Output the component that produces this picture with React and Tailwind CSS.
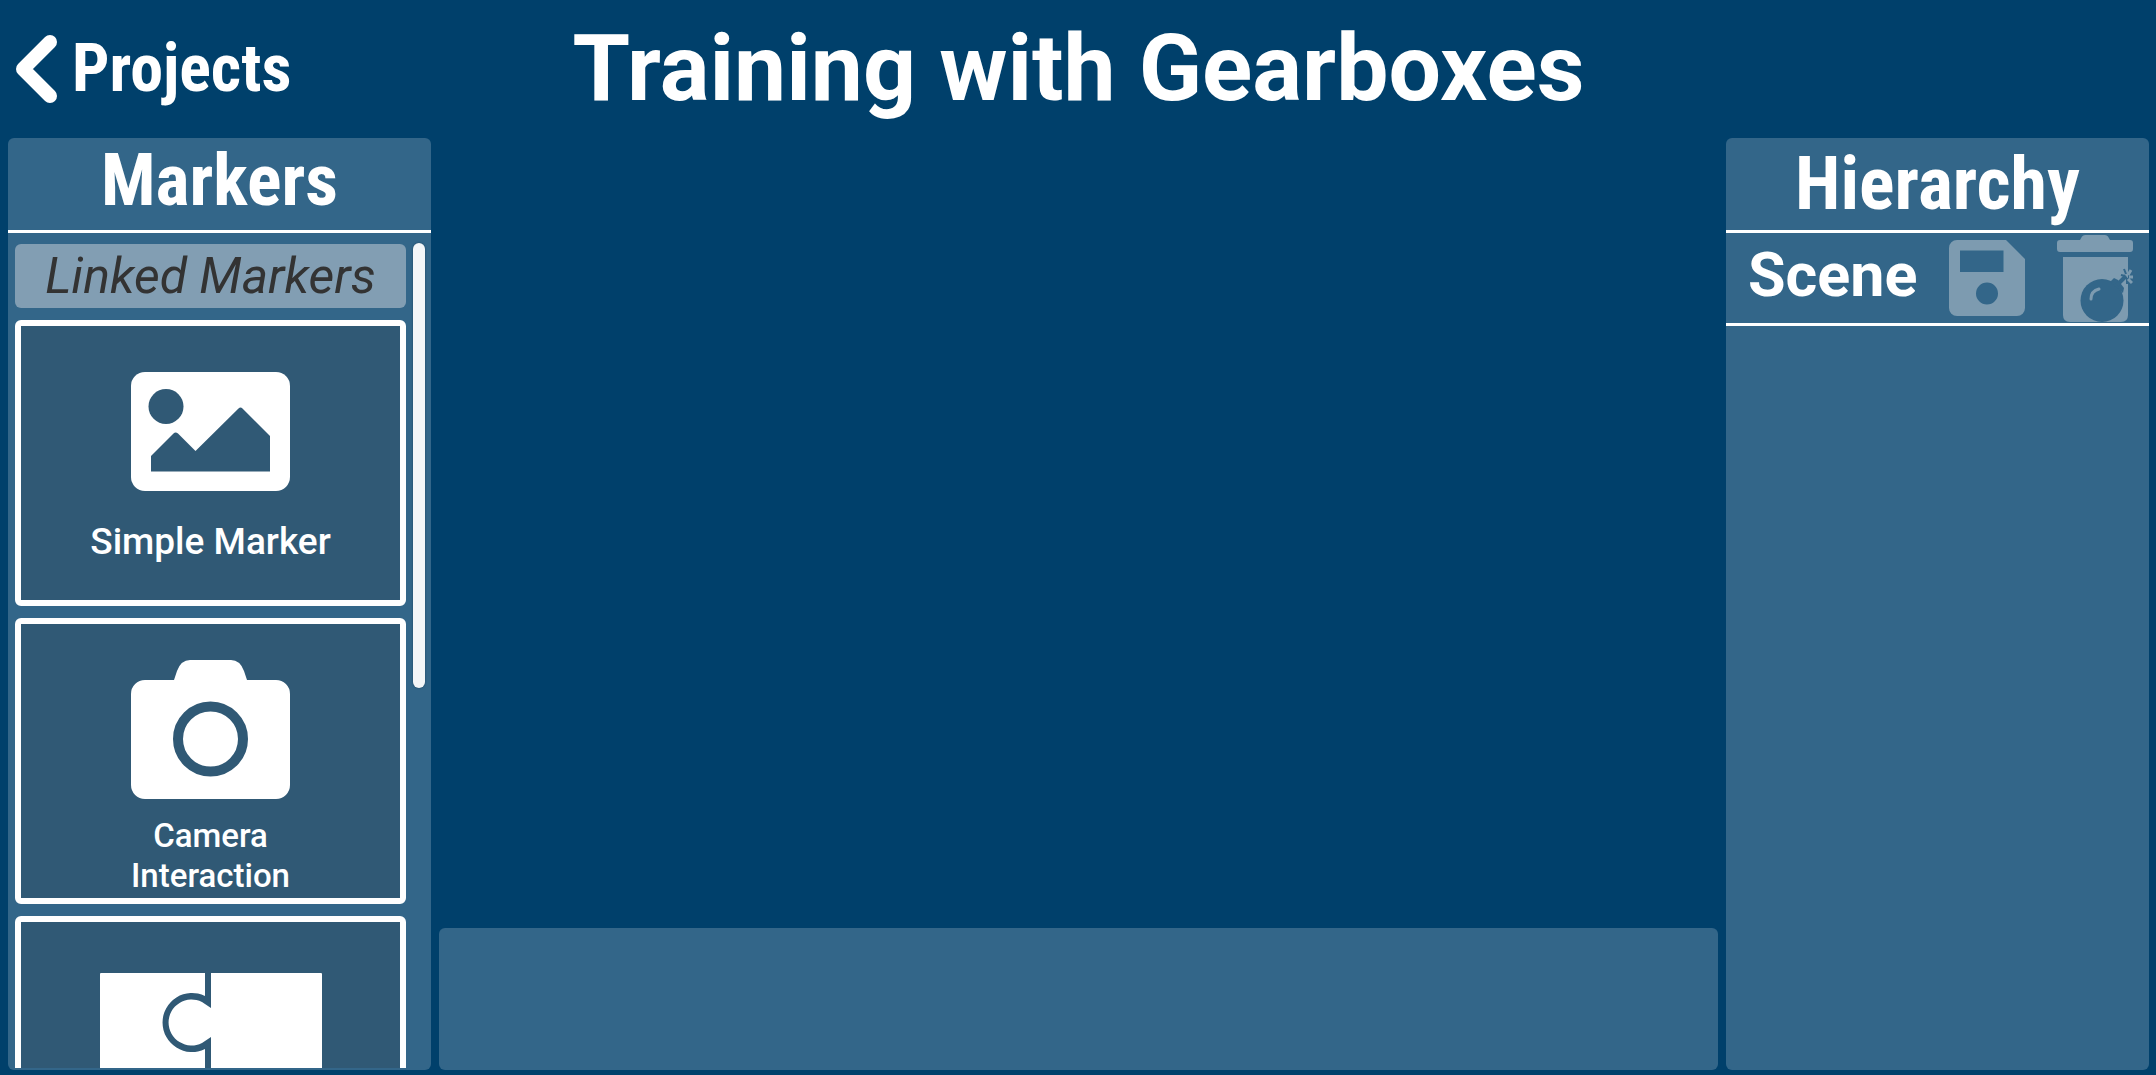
import React from 'react';

function ImageIcon() {
  return (
    <svg width="159" height="119" viewBox="0 0 159 119" fill="none" aria-hidden="true">
      <rect width="159" height="119" rx="14" fill="#fff" />
      <circle cx="35" cy="34.5" r="17.5" fill="#305975" />
      <path d="M20 84 42.5 61.5Q44.500 59.500 47 61.500L64.500 79 107.500 36.500Q109.500 34.500 111.500 36.500L139 64V99.500H20Z" fill="#305975" />
    </svg>
  );
}

function CameraIcon() {
  return (
    <svg width="159" height="139" viewBox="0 0 159 139" fill="none" aria-hidden="true">
      <path d="M14 20H43L46 11Q50 0 59 0H100Q109 0 113 11L116 20H145A14 14 0 0 1 159 34V125A14 14 0 0 1 145 139H14A14 14 0 0 1 0 125V34A14 14 0 0 1 14 20Z" fill="#fff" />
      <circle cx="79.500" cy="79" r="32.500" stroke="#305975" strokeWidth="10" />
    </svg>
  );
}

function PuzzleIcon() {
  return (
    <svg width="222" height="109" viewBox="0 0 222 109" fill="none" aria-hidden="true">
      <rect width="222" height="109" rx="1" fill="#fff" />
      <path d="M105 0H111V35L102 29A23 23 0 1 0 102 70L111 64V109H105V76A29.500 29.500 0 1 1 105 23Z" fill="#305975" />
    </svg>
  );
}

function SaveIcon() {
  return (
    <svg width="76" height="76" viewBox="0 0 76 76" aria-hidden="true">
      <path fillRule="evenodd" fill="#7d9bb0" d="M8 0H57L76 19V68A8 8 0 0 1 68 76H8A8 8 0 0 1 0 68V8A8 8 0 0 1 8 0ZM11 10.500V32H54.500V10.500ZM38 42.500A11 11 0 1 0 38 64.500A11 11 0 1 0 38 42.500Z" />
    </svg>
  );
}

function TrashBombIcon() {
  return (
    <svg width="76" height="87" viewBox="0 0 76 87" fill="none" aria-hidden="true">
      <path fill="#7d9bb0" d="M3 5H23L25 1.500Q26 0 28 0H48Q50 0 51 1.500L53 5H73Q76 5 76 8V14Q76 17 73 17H3Q0 17 0 14V8Q0 5 3 5Z" />
      <path fill="#7d9bb0" d="M6 22H71V80Q71 87 64 87H13Q6 87 6 80Z" />
      <circle cx="45" cy="65.500" r="21.500" fill="#336689" />
      <path d="M53 47 57 43 61 45 67 53 66 58Z" fill="#336689" />
      <path d="M34 64Q34 56 42 54" stroke="#7d9bb0" strokeWidth="3" strokeLinecap="round" />
      <path d="M60 50 69 41" stroke="#336689" strokeWidth="4" />
      <path d="M64 40 68 41M67 34 69 39M70 43V49" stroke="#336689" strokeWidth="2" />
      <path d="M71 40 74 35M72 42H76M71 44 75 48" stroke="#7d9bb0" strokeWidth="3" />
    </svg>
  );
}

const markers = [
  { name: 'Simple Marker', Icon: ImageIcon, caption: 'Simple Marker', text: 'text-[37px] leading-[52px]' },
  { name: 'Camera Interaction', Icon: CameraIcon, caption: 'Camera Interaction', text: 'w-48 pt-0.5 text-[33px] leading-10' },
  { name: 'Puzzle', Icon: PuzzleIcon },
];

function MarkerCard({ name, Icon, caption, text }) {
  return (
    <button
      type="button"
      aria-label={name}
      className="flex h-[286px] w-full shrink-0 flex-col items-center rounded-md border-6 border-white bg-[#305975] pt-5"
    >
      <span className="flex h-[170px] shrink-0 items-center justify-center">
        <Icon />
      </span>
      {caption && <span className={`font-medium ${text}`}>{caption}</span>}
    </button>
  );
}

export default function App() {
  return (
    <div className="flex h-screen flex-col overflow-hidden bg-[#00406b] pr-[7px] pb-[5px] pl-2 font-['Roboto',sans-serif] text-white">
      <header className="grid h-[138px] shrink-0 grid-cols-[423px_1fr_423px] items-center">
        <a href="#projects" className="flex items-center gap-3.5 pl-2 font-['Roboto_Condensed','Roboto',sans-serif] text-[66px] leading-[80px] font-bold">
          <svg width="42" height="68" viewBox="0 0 42 68" fill="none" aria-hidden="true">
            <path d="M34 7 7 34 34 61" stroke="#fff" strokeWidth="14" strokeLinecap="round" strokeLinejoin="round" />
          </svg>
          Projects
        </a>
        <h1 className="text-center text-[93px] leading-[110px] font-bold whitespace-nowrap">Training with Gearboxes</h1>
      </header>

      <main className="grid min-h-0 flex-1 grid-cols-[423px_1fr_423px] gap-2">
        <section className="flex min-h-0 flex-col overflow-hidden rounded-md bg-[#336689]">
          <h2 className="h-[95px] shrink-0 border-b-3 border-white text-center font-['Roboto_Condensed','Roboto',sans-serif] text-[72px] leading-[86px] font-bold">
            Markers
          </h2>
          <div className="flex min-h-0 flex-1 gap-[7px] pr-1.5 pb-0.5 pl-[7px]">
            <div className="flex min-w-0 flex-1 flex-col gap-3 overflow-hidden pt-[11px]">
              <p className="h-16 shrink-0 rounded-md bg-[#829eb3] text-center text-[50px] leading-[64px] text-[#333] italic">
                Linked Markers
              </p>
              {markers.map((m) => (
                <MarkerCard key={m.name} {...m} />
              ))}
            </div>
            <div className="mt-2.5 h-[445px] w-3 rounded-full bg-[#f4f6f8] shadow-[0_0_2px_#1c3f5a]" />
          </div>
        </section>

        <section className="flex flex-col justify-end">
          <div className="h-[142px] rounded-md bg-[#336689]" />
        </section>

        <section className="rounded-md bg-[#336689]">
          <h2 className="h-[95px] border-b-3 border-white text-center font-['Roboto_Condensed','Roboto',sans-serif] text-[74px] leading-[92px] font-bold">
            Hierarchy
          </h2>
          <div className="flex h-[93px] items-center border-b-3 border-white pr-4 pl-[22px]">
            <h3 className="flex-1 pb-1.5 text-[61px] leading-[80px] font-bold">Scene</h3>
            <div className="flex items-center gap-8">
              <button type="button" aria-label="Save scene"><SaveIcon /></button>
              <button type="button" aria-label="Clear scene"><TrashBombIcon /></button>
            </div>
          </div>
        </section>
      </main>
    </div>
  );
}
